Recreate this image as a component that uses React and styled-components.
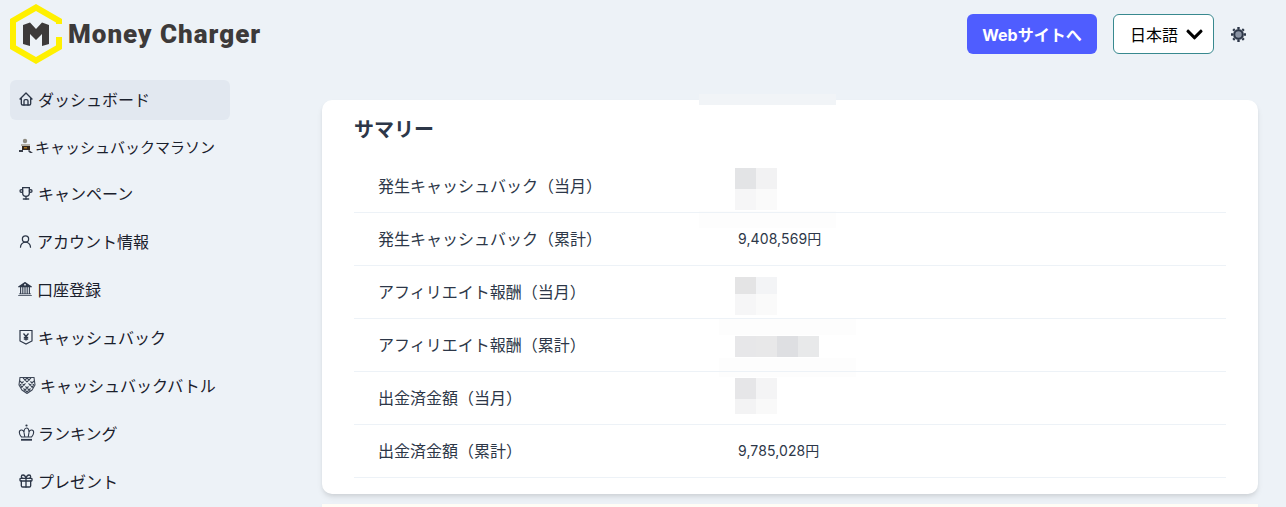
import React from "react";
import styled, { createGlobalStyle } from "styled-components";
import { TbHome, TbTrophy, TbGift } from "react-icons/tb";
import { UserRound } from "lucide-react";
import { FaChevronDown } from "react-icons/fa";
import { BsBank2 } from "react-icons/bs";

const FONT = `"Inter", "Noto Sans CJK JP", "Noto Sans", sans-serif`;

const GlobalStyle = createGlobalStyle`
	html, body {
		margin: 0;
		padding: 0;
		background: #edf2f7;
		overflow: hidden;
	}
	body {
		font-family: ${FONT};
		color: #2d3748;
	}
	* { box-sizing: border-box; }
`;

const Logo = () => (
	<svg width="52" height="60" viewBox="0 0 52 60">
		<path d="M26 0 L52 15 L52 20 L46 20 L46 18.500 L26 7 L6 18.500 L6 41.500 L26 53 L46 41.500 L46 33 L52 33 L52 45 L26 60 L0 45 L0 15 Z" fill="#fff000" />
		<path d="M13 21 L20 18.500 L26 25 L32 18.500 L39 21 L39 40 L32 42 L32 30 L26 36 L20 30 L20 42 L13 40 Z" fill="#3d3a3a" />
	</svg>
);

const SunIcon = () => (
	<svg width="17" height="17" viewBox="0 0 17 17" fill="none" stroke="#2d3748">
		<circle cx="8.500" cy="8.500" r="4.300" fill="#8a93a3" strokeWidth="2.200" />
		<path d="M8.500 1 V3 M8.500 14 V16 M1 8.500 H3 M14 8.500 H16 M3.200 3.200 L4.600 4.600 M12.400 12.400 L13.800 13.800 M3.200 13.800 L4.600 12.400 M12.400 4.600 L13.800 3.200" strokeWidth="2.400" />
	</svg>
);

const MarathonIcon = () => (
	<svg width="16" height="16" viewBox="0 0 16 16">
		<circle cx="7" cy="3" r="2.200" fill="#8d8a80" />
		<path d="M3 6 H12 V8 H3 Z" fill="#b4b0a6" />
		<rect x="4" y="8" width="8" height="4" fill="#33261c" />
		<rect x="6" y="9" width="3" height="1.500" fill="#a8741e" />
		<path d="M1 12 H5 V14 H1 Z M11 12 L15 15 H12 L10 13 Z" fill="#3a3f4a" />
	</svg>
);

const CashbackIcon = () => (
	<svg width="16" height="16" viewBox="0 0 16 16" fill="none" stroke="#2d3748" strokeWidth="1.200">
		<path d="M2 1.500 H14 V12 L8 15 L2 12 Z" />
		<path d="M5.500 4.500 L8 7.500 L10.500 4.500 M8 7.500 V11.500 M5.800 8.500 H10.200 M5.800 10.200 H10.200" strokeWidth="1.300" />
	</svg>
);

const BattleIcon = () => (
	<svg width="18" height="18" viewBox="0 0 18 18" fill="none" stroke="#3d4656" strokeWidth="1.100">
		<path d="M2 1.500 H16 L17 9 L14 14 L9 17.500 L4 14 L1 9 Z" />
		<path d="M2 5 L12 15 M5 2 L15 12 M9 2 L16 9 M2 9 L9 16 M16 5 L6 15 M13 2 L3 12 M9 2 L2 9 M16 9 L9 16" />
		<path d="M4 3 L14 13 M14 3 L4 13" stroke="#edf2f7" strokeWidth="1.300" />
	</svg>
);

const CrownIcon = () => (
	<svg width="17" height="18" viewBox="0 0 17 18" fill="none" stroke="#2d3748" strokeWidth="1.100">
		<circle cx="8.500" cy="1.500" r="1.100" fill="#2d3748" stroke="none" />
		<path d="M3.500 13 C1 10.500 0.500 6.500 3 6 C4.800 5.700 5.800 7 6 8.500 C6 6 7 4 8.500 4 C10 4 11 6 11 8.500 C11.200 7 12.200 5.700 14 6 C16.500 6.500 16 10.500 13.500 13 Z" />
		<path d="M6 8.500 L6.800 13 M11 8.500 L10.200 13" />
		<path d="M3 15.800 H14" strokeWidth="1.800" />
	</svg>
);

const navItems = [
	{ label: "ダッシュボード", icon: <TbHome size={16} />, active: true, gap: 4 },
	{ label: "キャッシュバックマラソン", icon: <MarathonIcon />, gap: 1, tight: true, small: true },
	{ label: "キャンペーン", icon: <TbTrophy size={16} />, tight: true },
	{ label: "アカウント情報", icon: <UserRound size={15} /> },
	{ label: "口座登録", icon: <BsBank2 size={14} />, gap: 5 },
	{ label: "キャッシュバック", icon: <CashbackIcon /> },
	{ label: "キャッシュバックバトル", icon: <BattleIcon />, gap: 4 },
	{ label: "ランキング", icon: <CrownIcon />, gap: 3 },
	{ label: "プレゼント", icon: <TbGift size={16} /> },
];

const rows = [
	{ label: "発生キャッシュバック（当月）", top: 8, heights: [21, 21], tones: ["#e3e4e6", "#f2f2f3", "#f6f6f7", "#fafafa"] },
	{ label: "発生キャッシュバック（累計）", value: "9,408,569円" },
	{ label: "アフィリエイト報酬（当月）", top: 11, heights: [17, 21], tones: ["#e4e4e5", "#f3f4f6", "#f6f6f7", "#fafafa"] },
	{ label: "アフィリエイト報酬（累計）", top: 17, heights: [21], wide: true, tones: ["#e7e7e9", "#e8e8e9", "#dedfe2", "#e8e9ea"] },
	{ label: "出金済金額（当月）", top: 6, heights: [21, 15], tones: ["#e6e6e8", "#f4f4f5", "#f3f3f4", "#f9f9f9"] },
	{ label: "出金済金額（累計）", value: "9,785,028円" },
];

const patches = [
	{ left: 377, top: 111, height: 17 },
	{ left: 397, top: 218, height: 17 },
	{ left: 397, top: 258, height: 19 },
];

const App = () => {
	return (
		<Page>
			<GlobalStyle />
			<Header>
				<Brand>
					<Logo />
					<BrandName>Money Charger</BrandName>
				</Brand>
				<HeaderRight>
					<SiteButton>Webサイトへ</SiteButton>
					<LangSelect>
						日本語
						<FaChevronDown size={19} color="#000" />
					</LangSelect>
					<ThemeToggle><SunIcon /></ThemeToggle>
				</HeaderRight>
			</Header>
			<Body>
				<Sidebar>
					{navItems.map((item) => (
						<NavItem
							key={item.label}
							$active={item.active}
							$gap={item.gap}
							$tight={item.tight}
							$small={item.small}
						>
							{item.icon}
							<span>{item.label}</span>
						</NavItem>
					))}
				</Sidebar>
				<Main>
					<Card>
						<TopPatch />
						{patches.map((patch) => (
							<RowPatch key={patch.top} $left={patch.left} $top={patch.top} $height={patch.height} />
						))}
						<CardTitle>サマリー</CardTitle>
						<Table>
							{rows.map((row) => (
								<Row key={row.label}>
									<RowLabel>{row.label}</RowLabel>
									{row.value ? (
										<RowValue>{row.value}</RowValue>
									) : (
										<Mosaic $wide={row.wide} $top={row.top} $heights={row.heights}>
											{row.tones.map((tone, i) => (
												<Tile key={i} $tone={tone} />
											))}
										</Mosaic>
									)}
								</Row>
							))}
						</Table>
					</Card>
					<NextCard />
				</Main>
			</Body>
		</Page>
	);
};

const Page = styled.div`
	width: 1286px;
	height: 507px;
	overflow: hidden;
	background: #edf2f7;
`;

const Header = styled.header`
	height: 68px;
	display: flex;
	align-items: flex-start;
	justify-content: space-between;
`;

const Brand = styled.div`
	display: flex;
	align-items: center;
	gap: 6px;
	padding: 4px 0 0 10px;
`;

const BrandName = styled.div`
	font-family: "Roboto", "Noto Sans", sans-serif;
	font-size: 26px;
	font-weight: 900;
	letter-spacing: 1px;
	color: #3d3a3a;
`;

const HeaderRight = styled.div`
	display: flex;
	align-items: center;
	padding: 14px 39px 0 0;
`;

const SiteButton = styled.button`
	width: 130px;
	height: 40px;
	border: 0;
	border-radius: 6px;
	background: #4f5dff;
	color: #fff;
	font-family: ${FONT};
	font-size: 16px;
	font-weight: 700;
	padding: 0;
`;

const LangSelect = styled.div`
	width: 101px;
	height: 40px;
	margin-left: 16px;
	padding-left: 16px;
	display: flex;
	align-items: center;
	gap: 7px;
	border: 1px solid #38898f;
	border-radius: 6px;
	background: #fff;
	color: #000;
	font-size: 16px;
`;

const ThemeToggle = styled.div`
	margin-left: 16px;
	display: flex;
`;

const Body = styled.div`
	display: flex;
	align-items: flex-start;
`;

const Sidebar = styled.nav`
	width: 220px;
	margin: 12px 0 0 10px;
	display: flex;
	flex-direction: column;
	gap: 8px;
`;

const NavItem = styled.div`
	height: 40px;
	margin-top: ${(p) => (p.$tight ? -1 : 0)}px;
	padding: 0 0 2px 8px;
	display: flex;
	align-items: center;
	gap: ${(p) => (p.$gap === undefined ? 4 : p.$gap)}px;
	border-radius: 6px;
	background: ${(p) => (p.$active ? "#e2e8f0" : "transparent")};
	color: #1a202c;
	font-size: ${(p) => (p.$small ? 15 : 16)}px;

	svg {
		flex: none;
		color: #2d3748;
	}
`;

const Main = styled.main`
	margin: 32px 0 0 92px;
	width: 936px;
`;

const Card = styled.section`
	position: relative;
	height: 394px;
	padding: 17px 32px 0;
	background: #fff;
	border-radius: 10px;
	box-shadow: 0 4px 6px -1px rgba(0, 0, 0, 0.1), 0 2px 4px -1px rgba(0, 0, 0, 0.06);
`;

const TopPatch = styled.div`
	position: absolute;
	top: -6px;
	left: 377px;
	width: 137px;
	height: 11px;
	background: #f1f4f7;
`;

const RowPatch = styled.div`
	position: absolute;
	left: ${(p) => p.$left}px;
	top: ${(p) => p.$top}px;
	width: 137px;
	height: ${(p) => p.$height}px;
	background: #fdfdfd;
`;

const CardTitle = styled.h2`
	margin: 0;
	height: 28px;
	font-size: 20px;
	line-height: 26px;
	font-weight: 700;
	color: #2d3748;
`;

const Table = styled.div`
	margin-top: 15px;
	display: flex;
	flex-direction: column;
`;

const Row = styled.div`
	position: relative;
	height: 53px;
	padding-left: 24px;
	display: flex;
	align-items: center;
	border-bottom: 1px solid #edf2f7;
`;

const RowLabel = styled.div`
	width: 357px;
	font-size: 16px;
	color: #2d3748;
	margin-top: -2px;
`;

const RowValue = styled.div`
	font-size: 14px;
	letter-spacing: 0.1px;
	color: #2d3748;
	padding-left: 3px;
	margin-top: -2px;
`;

const Mosaic = styled.div`
	align-self: flex-start;
	margin-top: ${(p) => p.$top}px;
	display: grid;
	grid-template-columns: repeat(${(p) => (p.$wide ? 4 : 2)}, 21px);
	grid-template-rows: ${(p) => p.$heights.map((h) => `${h}px`).join(" ")};
`;

const Tile = styled.div`
	background: ${(p) => p.$tone};
`;

const NextCard = styled.div`
	margin-top: 10px;
	height: 10px;
	background: #fffcf5;
	box-shadow: 0 2px 4px rgba(0, 0, 0, 0.06);
`;

export default App;
